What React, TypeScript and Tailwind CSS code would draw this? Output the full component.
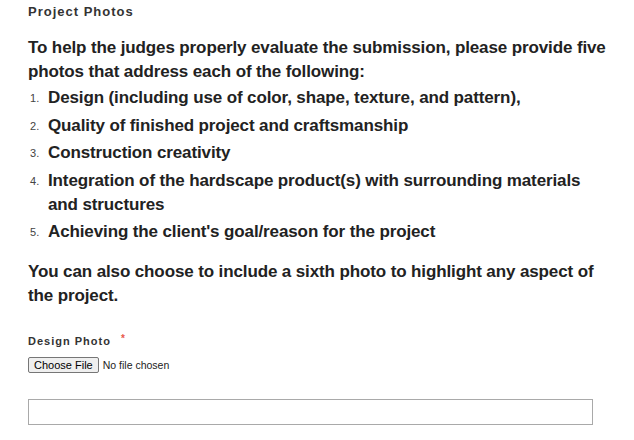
const items = [
  ["Design (including use of color, shape, texture, and pattern),"],
  ["Quality of finished project and craftsmanship"],
  ["Construction creativity"],
  ["Integration of the hardscape product(s) with surrounding materials and structures"],
  ["Achieving the client's goal/reason for the project"],
];

export default function App() {
  return (
    <div className="w-[634px] h-[440px] overflow-hidden bg-white font-['Liberation_Sans',Arial,sans-serif] text-[#222] pl-[28px] pr-[14px]">
      <h3 className="pt-[4px] text-[13px] leading-[16px] font-bold tracking-[1px] text-[#333]">Project Photos</h3>

      <p className="mt-[16px] text-[17px] leading-[24px] font-bold tracking-[-0.12px]">
        To help the judges properly evaluate the submission, please provide five photos that address each of the following:
      </p>
      <ol className="mt-[2px] flex flex-col gap-[3.5px]">
        {items.map(([text], i) => (
          <li key={i} className="flex text-[17px] leading-[24px] font-bold tracking-[-0.12px]">
            <span className="w-[20px] shrink-0 pl-[2px] text-[11px] font-normal tracking-normal text-[#444]">{i + 1}.</span>
            <span className="pr-[28px]">{text}</span>
          </li>
        ))}
      </ol>

      <p className="mt-[16px] text-[17px] leading-[24px] font-bold tracking-[-0.12px] pr-[12px]">
        You can also choose to include a sixth photo to highlight any aspect of the project.
      </p>

      <div className="mt-[26px] flex items-start gap-[10px] text-[11px] leading-[14px] font-bold tracking-[1px] text-[#333]">
        <span>Design Photo</span>
        <span className="text-[#e8574a] text-[10px] leading-[10px]">*</span>
      </div>
      <div className="mt-[9px] flex items-center gap-[4px] text-[11px] leading-[14px]">
        <span className="px-[5px] h-[16px] flex items-center border border-[#767676] rounded-[2px] bg-[#efefef] text-black">Choose File</span>
        <span className="text-[#222] text-[10.5px]">No file chosen</span>
      </div>

      <div className="mt-[26px] w-[565px] h-[26px] border border-[#a9a9a9]"></div>
    </div>
  );
}
